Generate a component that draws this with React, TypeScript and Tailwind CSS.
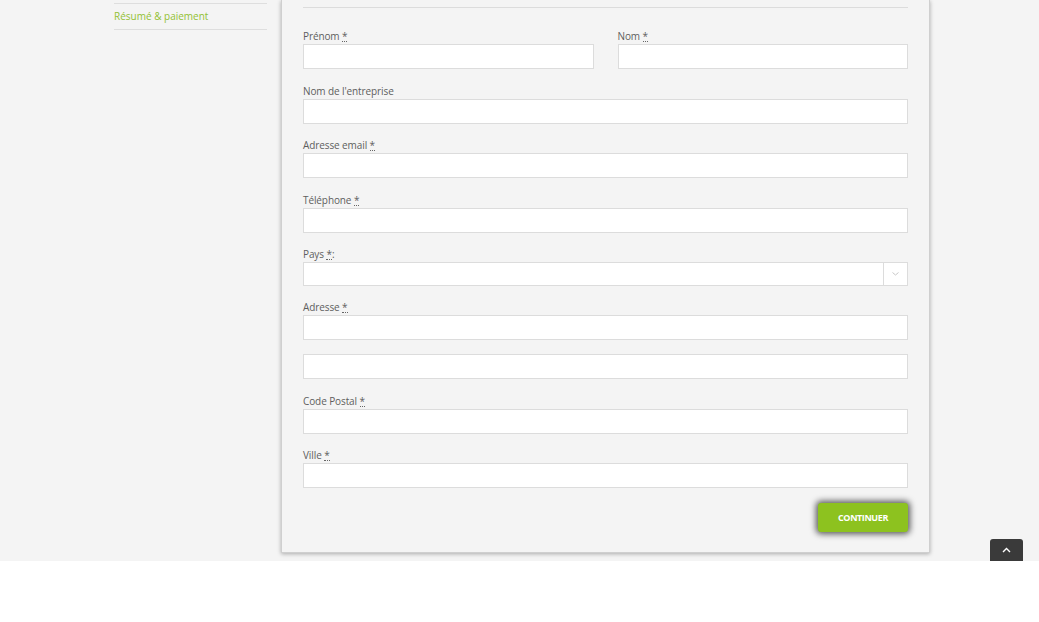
import React from "react";

const font = { fontFamily: '"Open Sans", "Liberation Sans", sans-serif' };

function Req() {
  return (
    <abbr
      title="obligatoire"
      className="no-underline border-b border-dotted border-[#666] leading-[9px] inline-block"
    >
      *
    </abbr>
  );
}

function Label({ children }: { children: React.ReactNode }) {
  return (
    <div className="h-[14px] pb-[2px] text-[10px] tracking-[-0.1px] leading-[12px] text-[#5e5e5e] whitespace-nowrap">
      {children}
    </div>
  );
}

function Input({ className = "" }: { className?: string }) {
  return (
    <div className={`h-[25px] bg-white border border-[#dcdcdc] ${className}`} />
  );
}

export default function App() {
  return (
    <div className="w-full h-[622px] bg-white" style={font}>
      <div className="relative h-[561px] bg-[#f4f4f4] overflow-hidden flex">
        {/* Sidebar */}
        <div className="ml-[114px] w-[153px] shrink-0">
          <div className="mt-[3px] border-t border-[#dedede] h-[27px] border-b flex items-center text-[10px] text-[#92c132]">
            Résumé &amp; paiement
          </div>
        </div>

        {/* Card */}
        <div className="ml-[14px] w-[649px] h-[553px] shrink-0 bg-[#f4f4f4] border border-t-0 border-[#cfcfcf] shadow-[0_1px_4px_rgba(0,0,0,0.3)] px-[21px] flex flex-col">
          <div className="mt-[7px] h-px bg-[#dcdcdc]" />

          <div className="mt-[22px] flex gap-[24px]">
            <div className="flex-1">
              <Label>
                Prénom <Req />
              </Label>
              <Input />
            </div>
            <div className="flex-1">
              <Label>
                Nom <Req />
              </Label>
              <Input />
            </div>
          </div>

          <div className="mt-[16px]">
            <Label>Nom de l'entreprise</Label>
            <Input />
          </div>

          <div className="mt-[15px]">
            <Label>
              Adresse email <Req />
            </Label>
            <Input />
          </div>

          <div className="mt-[16px]">
            <Label>
              Téléphone <Req />
            </Label>
            <Input />
          </div>

          <div className="mt-[15px]">
            <Label>
              Pays <Req />:
            </Label>
            <div className="h-[24px] bg-white border border-[#dcdcdc] flex justify-end">
              <div className="w-[24px] border-l border-[#dcdcdc] flex items-center justify-center">
                <svg width="7" height="4" viewBox="0 0 7 4" fill="none">
                  <path d="M0.5 0.5L3.5 3L6.5 0.5" stroke="#c8c8c8" strokeWidth="1" />
                </svg>
              </div>
            </div>
          </div>

          <div className="mt-[15px]">
            <Label>
              Adresse <Req />
            </Label>
            <Input />
          </div>

          <div className="mt-[14px]">
            <Input />
          </div>

          <div className="mt-[16px]">
            <Label>
              Code Postal <Req />
            </Label>
            <Input />
          </div>

          <div className="mt-[15px]">
            <Label>
              Ville <Req />
            </Label>
            <Input />
          </div>

          <div className="mt-[15px] flex justify-end">
            <button className="w-[90px] h-[29px] rounded-[3px] bg-[#8dc21f] text-white text-[9px] font-bold tracking-[-0.4px] shadow-[0_0_6px_2px_rgba(0,0,0,0.65)]">
              CONTINUER
            </button>
          </div>
        </div>

        {/* Scroll to top */}
        <div className="absolute right-[16px] bottom-0 w-[33px] h-[22px] bg-[#3a3a3a] rounded-t-[3px] flex items-center justify-center">
          <svg width="9" height="6" viewBox="0 0 9 6" fill="none">
            <path d="M1 5L4.5 1.5L8 5" stroke="#ffffff" strokeWidth="1.4" />
          </svg>
        </div>
      </div>
    </div>
  );
}
